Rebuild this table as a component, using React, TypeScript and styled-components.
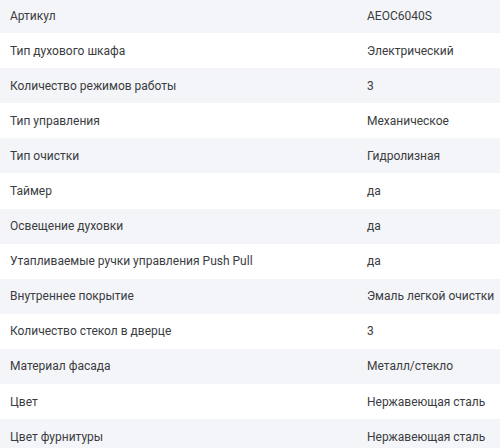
import styled, { createGlobalStyle } from "styled-components"

const GlobalStyle = createGlobalStyle`
	html, body {
		margin: 0;
		padding: 0;
		background: #ffffff;
	}
	body {
		font-family: Roboto, "Noto Sans", sans-serif;
		-webkit-font-smoothing: antialiased;
	}
`

const Table = styled.div`
	display: flex;
	flex-direction: column;
	width: 500px;
	margin-top: -2px;
`

const Row = styled.div<{ $striped: boolean }>`
	display: grid;
	grid-template-columns: 357px 1fr;
	align-items: center;
	height: 35.1px;
	background: ${(p) => (p.$striped ? "#f4f5f8" : "#ffffff")};
`

const Cell = styled.div`
	padding: 0 10px;
	font-size: 12px;
	color: #3a3c3f;
	white-space: nowrap;
	overflow: hidden;
`

const specs: [string, string][] = [
	["Артикул", "AEOC6040S"],
	["Тип духового шкафа", "Электрический"],
	["Количество режимов работы", "3"],
	["Тип управления", "Механическое"],
	["Тип очистки", "Гидролизная"],
	["Таймер", "да"],
	["Освещение духовки", "да"],
	["Утапливаемые ручки управления Push Pull", "да"],
	["Внутреннее покрытие", "Эмаль легкой очистки"],
	["Количество стекол в дверце", "3"],
	["Материал фасада", "Металл/стекло"],
	["Цвет", "Нержавеющая сталь"],
	["Цвет фурнитуры", "Нержавеющая сталь"],
]

const App = () => {
	return (
		<>
			<GlobalStyle />
			<Table>
				{specs.map(([name, value], i) => (
					<Row key={name} $striped={i % 2 === 0}>
						<Cell>{name}</Cell>
						<Cell>{value}</Cell>
					</Row>
				))}
			</Table>
		</>
	)
}

export default App
